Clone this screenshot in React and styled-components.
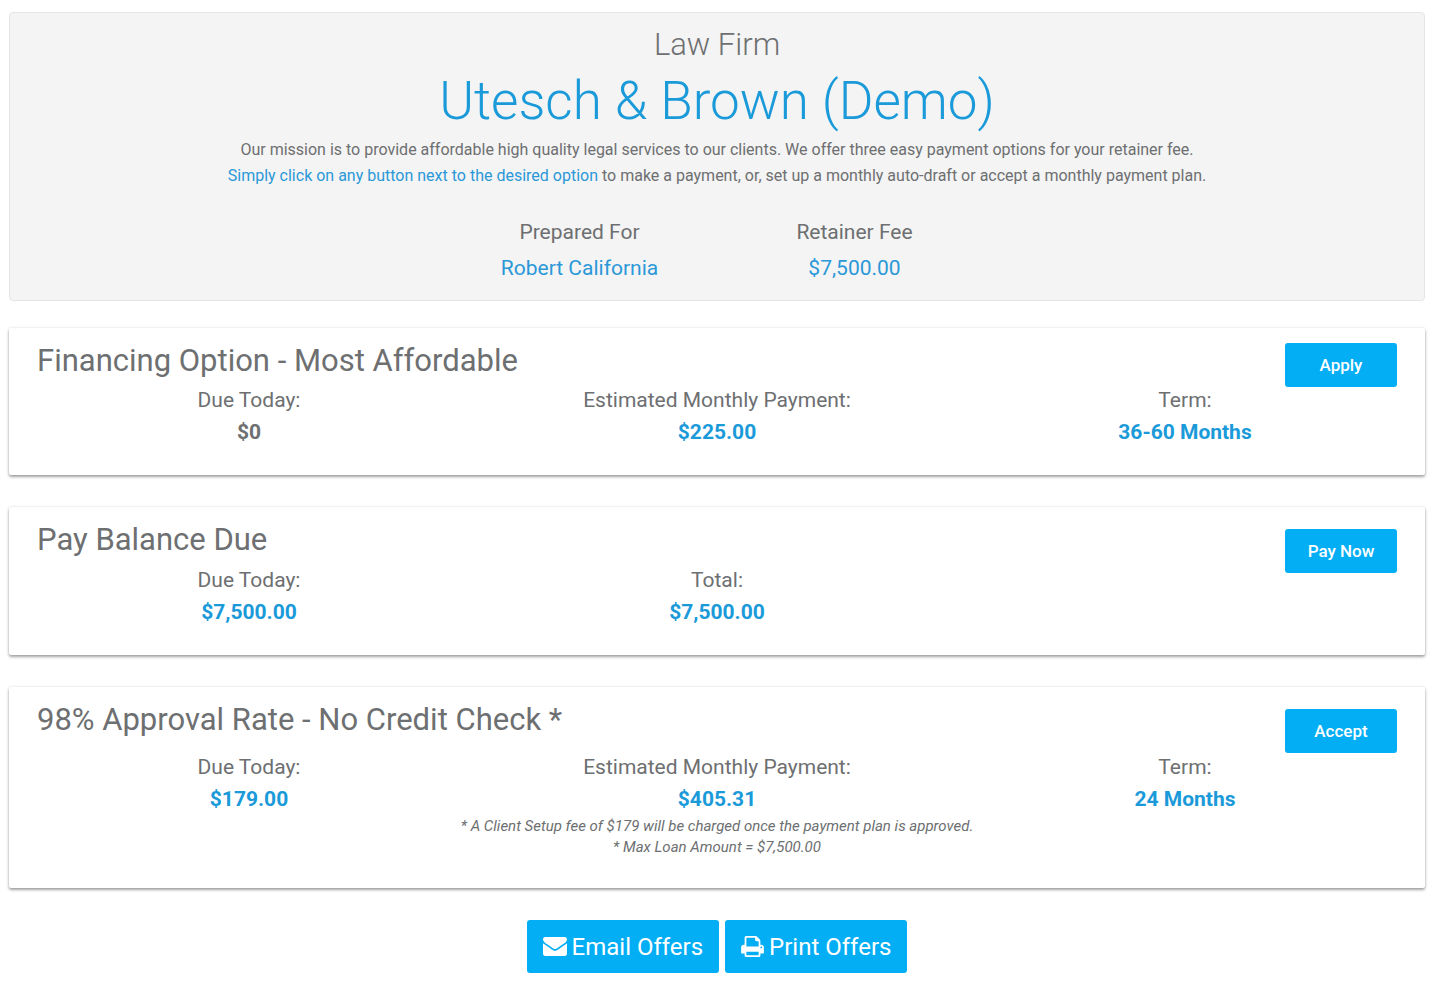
import React from "react";
import styled, { createGlobalStyle } from "styled-components";

const GlobalStyle = createGlobalStyle`
  * {
    box-sizing: border-box;
  }
  body {
    margin: 0;
    background-color: #ffffff;
    color: #6d6f71;
    font-family: Roboto, "Liberation Sans", sans-serif;
  }
  h1, h2, p, dl, dt, dd {
    margin: 0;
    font-weight: 400;
  }
`;

const offers = [
  {
    title: "Financing Option - Most Affordable",
    action: "Apply",
    compact: true,
    headHeight: 59,
    details: [
      { label: "Due Today:", value: "$0", plain: true },
      { label: "Estimated Monthly Payment:", value: "$225.00" },
      { label: "Term:", value: "36-60 Months" },
    ],
  },
  {
    title: "Pay Balance Due",
    action: "Pay Now",
    headHeight: 60,
    details: [
      { label: "Due Today:", value: "$7,500.00" },
      { label: "Total:", value: "$7,500.00" },
    ],
  },
  {
    title: "98% Approval Rate - No Credit Check *",
    action: "Accept",
    headHeight: 67,
    details: [
      { label: "Due Today:", value: "$179.00" },
      { label: "Estimated Monthly Payment:", value: "$405.31" },
      { label: "Term:", value: "24 Months" },
    ],
    notes: [
      "* A Client Setup fee of $179 will be charged once the payment plan is approved.",
      "* Max Loan Amount = $7,500.00",
    ],
  },
];

const EnvelopeIcon = () => (
  <svg width="24" height="19" viewBox="0 256 1792 1408" aria-hidden="true">
    <path
      fill="currentColor"
      d="M1792 710v794q0 66-47 113t-113 47H160q-66 0-113-47T0 1504V710q44 49 101 87 362 246 497 345 57 42 92.500 65.500t94.500 48 110 24.500h2q51 0 110-24.500t94.500-48T1194 1142q170-123 498-345 57-39 100-87zm0-294q0 79-49 151t-122 123q-376 261-468 325-10 7-42.500 30.500t-54 38-52 32.500-57.500 27-50 9h-2q-23 0-50-9t-57.500-27-52-32.500-54-38T639 1015q-91-64-262-182.500T172 690q-62-42-117-115.500T0 438q0-78 41.500-130T160 256h1472q65 0 112.500 47t47.500 113z"
    />
  </svg>
);

const PrintIcon = () => (
  <svg width="23" height="21" viewBox="0 0 1664 1536" aria-hidden="true">
    <path
      fill="currentColor"
      d="M384 1408h896v-256H384v256zm0-640h896V384h-160q-40 0-68-28t-28-68V128H384v640zm1152 64q0-26-19-45t-45-19-45 19-19 45 19 45 45 19 45-19 19-45zm128 0v416q0 13-9.500 22.500t-22.500 9.500h-224v160q0 40-28 68t-68 28H352q-40 0-68-28t-28-68v-160H32q-13 0-22.500-9.500T0 1248V832q0-79 56.500-135.500T192 640h64V96q0-40 28-68t68-28h672q40 0 88 20t76 48l152 152q28 28 48 76t20 88v256h64q79 0 135.500 56.500T1664 832z"
    />
  </svg>
);

const App = () => {
  return (
    <>
      <GlobalStyle />
      <S.Page>
        <S.Hero>
          <S.Kicker>Law Firm</S.Kicker>
          <S.FirmName>Utesch &amp; Brown (Demo)</S.FirmName>
          <S.Mission>
            Our mission is to provide affordable high quality legal services to
            our clients. We offer three easy payment options for your retainer
            fee.
            <br />
            <S.Accent>
              Simply click on any button next to the desired option
            </S.Accent>{" "}
            to make a payment, or, set up a monthly auto-draft or accept a
            monthly payment plan.
          </S.Mission>
          <S.Summary>
            <S.SummaryItem>
              <dt>Prepared For</dt>
              <S.SummaryValue>Robert California</S.SummaryValue>
            </S.SummaryItem>
            <S.SummaryItem>
              <dt>Retainer Fee</dt>
              <S.SummaryValue>$7,500.00</S.SummaryValue>
            </S.SummaryItem>
          </S.Summary>
        </S.Hero>

        {offers.map((offer) => (
          <S.Card key={offer.title}>
            <S.CardHead $height={offer.headHeight}>
              <S.CardTitle>{offer.title}</S.CardTitle>
              <S.ActionButton type="button" $compact={offer.compact}>
                {offer.action}
              </S.ActionButton>
            </S.CardHead>
            <S.Details>
              {offer.details.map((item) => (
                <div key={item.label}>
                  <S.Label>{item.label}</S.Label>
                  <S.Value $plain={item.plain}>{item.value}</S.Value>
                </div>
              ))}
            </S.Details>
            {offer.notes && (
              <S.Notes>
                {offer.notes.map((note) => (
                  <p key={note}>{note}</p>
                ))}
              </S.Notes>
            )}
          </S.Card>
        ))}

        <S.Footer>
          <S.OfferButton type="button">
            <EnvelopeIcon />
            Email Offers
          </S.OfferButton>
          <S.OfferButton type="button">
            <PrintIcon />
            Print Offers
          </S.OfferButton>
        </S.Footer>
      </S.Page>
    </>
  );
};

const Button = styled.button`
  border: none;
  border-radius: 3px;
  background-color: #03aef5;
  color: #ffffff;
  font-family: inherit;
  cursor: pointer;
`;

const S = {
  Page: styled.main`
    padding: 12px 6px 10px 9px;
  `,
  Hero: styled.header`
    padding: 12px 16px 14px;
    margin-bottom: 27px;
    border: 1px solid #e3e6e6;
    border-radius: 4px;
    background-color: #f4f4f4;
    text-align: center;
  `,
  Kicker: styled.p`
    font-size: 31px;
    font-weight: 300;
    line-height: 40px;
  `,
  FirmName: styled.h1`
    color: #1b9ad9;
    font-size: 53px;
    font-weight: 300;
    line-height: 72px;
  `,
  Mission: styled.p`
    font-size: 16px;
    line-height: 26px;
  `,
  Accent: styled.span`
    color: #2b98d8;
  `,
  Summary: styled.dl`
    display: flex;
    justify-content: center;
    margin-top: 25px;
    font-size: 21px;
    line-height: 36px;
  `,
  SummaryItem: styled.div`
    width: 275px;
  `,
  SummaryValue: styled.dd`
    color: #2b98d8;
  `,
  Card: styled.section`
    padding: 0 6px 30px;
    margin-bottom: 32px;
    border-radius: 2px;
    background-color: #ffffff;
    box-shadow: 0 2px 3px rgba(0, 0, 0, 0.35), 0 0 3px rgba(0, 0, 0, 0.12);
  `,
  CardHead: styled.div`
    display: flex;
    justify-content: space-between;
    align-items: flex-start;
    height: ${({ $height }) => $height}px;
    padding-inline: 22px;
  `,
  CardTitle: styled.h2`
    padding-top: 12px;
    font-size: 31px;
    line-height: 42px;
  `,
  ActionButton: styled(Button)`
    flex: none;
    width: 112px;
    height: 44px;
    margin-top: ${({ $compact }) => ($compact ? 15 : 22)}px;
    font-size: 17px;
    font-weight: 500;
  `,
  Details: styled.dl`
    display: grid;
    grid-template-columns: repeat(3, 1fr);
    font-size: 21px;
    line-height: 26px;
    text-align: center;
  `,
  Label: styled.dt`
    margin-bottom: 6px;
  `,
  Value: styled.dd`
    color: ${({ $plain }) => ($plain ? "inherit" : "#1b9ad9")};
    && {
      font-weight: 700;
    }
  `,
  Notes: styled.div`
    padding-top: 4px;
    font-size: 15px;
    font-style: italic;
    line-height: 21px;
    text-align: center;
  `,
  Footer: styled.div`
    display: flex;
    justify-content: center;
    gap: 6px;
  `,
  OfferButton: styled(Button)`
    display: flex;
    align-items: center;
    gap: 5px;
    height: 53px;
    padding: 0 16px;
    font-size: 24px;
  `,
};

export default App;
